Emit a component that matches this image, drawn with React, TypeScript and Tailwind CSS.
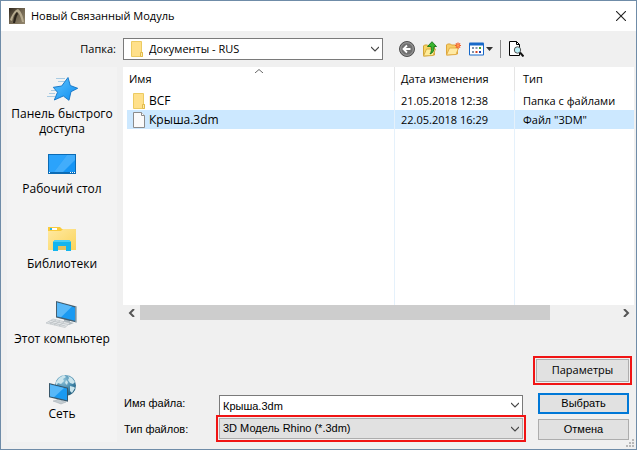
import { useState } from "react";
import type { ReactNode } from "react";

type Place = { title: string; icon: ReactNode };
type FileRow = { name: string; date: string; type: string; folder: boolean };

const StarIcon = () => (
  <svg className="h-8 w-8" viewBox="0 0 32 32" aria-hidden="true">
    <defs>
      <linearGradient id="star" x1="0" y1="0" x2="1" y2="1">
        <stop offset="0" stopColor="#5cc4ff" />
        <stop offset="1" stopColor="#0f8df0" />
      </linearGradient>
    </defs>
    <path
      d="M10 5.500h9M12 8.500h7M5 17.500h5M3 20.500h6M1 23.500h8"
      stroke="#a9cbe2"
      strokeWidth="1"
    />
    <path
      d="M22 4.500 24.300 12.500 31.700 15.300 25 18.700 23 27.300 17.300 23 8.300 27 11.500 19.300 7.300 14.300 15.700 13Z"
      fill="url(#star)"
      stroke="#1273c4"
      strokeWidth="0.900"
    />
  </svg>
);

const DesktopIcon = () => (
  <svg className="h-8 w-8" viewBox="0 0 32 32" aria-hidden="true">
    <rect x="2" y="6" width="28" height="20" fill="#0b6bb5" />
    <rect x="3" y="7" width="26" height="17" fill="#1595f5" />
    <path d="M3 24V7h18L8 24Z" fill="#2ba3fb" />
    <path d="M29 7v5L17 24H8L21 7Z" fill="#42adfb" />
    <path d="M3 24.500h1M24 24.500h1M26 24.500h1M28 24.500h1" stroke="#fff" />
  </svg>
);

const LibraryIcon = () => (
  <svg className="h-8 w-8" viewBox="0 0 32 32" aria-hidden="true">
    <defs>
      <linearGradient id="lib" x1="0" y1="0" x2="1" y2="1">
        <stop offset="0" stopColor="#ffe9a2" />
        <stop offset="1" stopColor="#fad45c" />
      </linearGradient>
    </defs>
    <path d="M2 4h12l2 2h14v4H2Z" fill="#f9cb3c" />
    <path d="M4 5h7v2H4Z" fill="#fff" />
    <path d="M4 5h2v2H4Z" fill="#28b5e8" />
    <path d="M2 8h13l2-2h13v21H2Z" fill="url(#lib)" />
    <path d="M9 17h14l2 2v9h-5v-5h-8v5H7v-9Z" fill="#12b5ee" />
    <path d="M9 17h14l2 2H7Z" fill="#4acdf5" />
    <path d="M12 23h8v4h-8Z" fill="#e2c15c" />
  </svg>
);

const ComputerIcon = () => (
  <svg className="h-8 w-8" viewBox="0 0 32 32" aria-hidden="true">
    <path d="m18 20 6 2v2l4 1-5 2-8-3 3-1Z" fill="#aeb8be" />
    <path d="m7 21 17 4-5 4.500L0 25Z" fill="#e4e7e9" stroke="#b4babe" strokeWidth="0.600" />
    <path
      d="m5 22.500 17 4M2.500 24l17 4M10 22l-6 4M14 23l-6 4M18 24l-5 4"
      stroke="#b0b7bb"
      strokeWidth="0.600"
    />
    <path d="m10 3 20.500 5.500v16L10 19.500Z" fill="#455f70" />
    <path d="m11 4.500 18 5v13.300L11 18.300Z" fill="#1a9af2" />
    <path d="m11 4.500 15 4.100-11 10.600-4-1Z" fill="#58b8f8" />
    <path d="m29.500 8.500 1 .3v15.700l-1-.3Z" fill="#b8c7d0" />
  </svg>
);

const NetworkIcon = () => (
  <svg className="h-8 w-8" viewBox="0 0 32 32" aria-hidden="true">
    <defs>
      <radialGradient id="globe" cx="0.400" cy="0.250" r="0.800">
        <stop offset="0" stopColor="#8fc3da" />
        <stop offset="0.600" stopColor="#3f84a8" />
        <stop offset="1" stopColor="#1f5876" />
      </radialGradient>
    </defs>
    <circle cx="19.500" cy="12.500" r="10.500" fill="url(#globe)" />
    <path
      d="m10 9 3-4 5-3 2 2-3 2 1 2-3 3-3-1-2 3ZM22 3l4 2 3 4-2 2-3-1-2-3 1-2ZM24 13l4 1 1 1-3 5-2-2ZM20 7l2 2-1 3-2-2Z"
      fill="#cbe5ed"
    />
    <path d="m11 24 5 2v2l4 1-5 2-8-3 4-1Z" fill="#c3ccd1" stroke="#929da4" strokeWidth="0.400" />
    <path d="m3 10 19 4.700v14L3 24.300Z" fill="#38576b" />
    <path d="m4 11.400 17 4.200v11.600L4 23.200Z" fill="#1a9af2" />
    <path d="m4 11.400 14 3.500-10 9.300-4-1Z" fill="#58b8f8" />
  </svg>
);

const FolderIcon = () => (
  <svg className="h-4 w-4 shrink-0" viewBox="0 0 16 16" aria-hidden="true">
    <path d="M2.500.500h10v11h1v4h-11Z" fill="#ffe08a" stroke="#eccb62" />
    <path d="M11.500 15.500v-4h2v4Z" fill="#ffeaa8" stroke="#e2bb4b" />
  </svg>
);

const FileIcon = () => (
  <svg className="h-4 w-4 shrink-0" viewBox="0 0 16 16" aria-hidden="true">
    <path d="M2.500.500h8l3 3v12h-11Z" fill="#fafafa" stroke="#8b8b8b" />
    <path d="M10.500.500v3h3" fill="#fff" stroke="#8b8b8b" />
  </svg>
);

const Chevron = () => (
  <svg
    className="pointer-events-none absolute top-1/2 right-1 h-2 w-2 -translate-y-1/2"
    viewBox="0 0 8 8"
    aria-hidden="true">
    <path d="M0 2l4 4 4-4" fill="none" stroke="#444" strokeWidth="1.100" />
  </svg>
);

const places: Place[] = [
  { title: "Панель быстрого доступа", icon: <StarIcon /> },
  { title: "Рабочий стол", icon: <DesktopIcon /> },
  { title: "Библиотеки", icon: <LibraryIcon /> },
  { title: "Этот компьютер", icon: <ComputerIcon /> },
  { title: "Сеть", icon: <NetworkIcon /> },
];

const files: FileRow[] = [
  { name: "BCF", date: "21.05.2018 12:38", type: "Папка с файлами", folder: true },
  { name: "Крыша.3dm", date: "22.05.2018 16:29", type: 'Файл "3DM"', folder: false },
];

const TitleBar = () => (
  <header className="flex h-[30px] items-center bg-white pr-1.5 pl-2">
    <svg className="mr-1.5 h-4 w-4" viewBox="0 0 16 16" aria-hidden="true">
      <defs>
        <linearGradient id="app" x1="0" y1="0" x2="1" y2="1">
          <stop offset="0" stopColor="#2e261c" />
          <stop offset="0.450" stopColor="#6d614d" />
          <stop offset="1" stopColor="#94886f" />
        </linearGradient>
      </defs>
      <rect width="16" height="16" fill="url(#app)" />
      <path d="M1 12C3 6 6 2 9 1c3 2 5 7 6 13h-2C12 9 10 5 8 4c-3 2-4 5-5 9Z" fill="#b5a98d" />
      <path d="M4 15C5 9 6 6 8 4l1 2c-2 3-2 6-3 9Z" fill="#2b241a" />
    </svg>
    <h1 className="flex-1 text-[11px]">Новый Связанный Модуль</h1>
    <button className="p-1" aria-label="Закрыть">
      <svg className="h-2.5 w-2.5" viewBox="0 0 10 10" aria-hidden="true">
        <path d="M0 0l10 10M10 0L0 10" stroke="#222" strokeWidth="1.100" />
      </svg>
    </button>
  </header>
);

const Toolbar = () => (
  <div className="flex items-center gap-[7px]">
    <button aria-label="Назад">
      <svg className="h-4 w-4" viewBox="0 0 16 16" aria-hidden="true">
        <circle cx="8" cy="8" r="7.500" fill="#707070" stroke="#505050" />
        <circle cx="8" cy="8" r="6.300" fill="none" stroke="#a5a5a5" strokeWidth="0.900" />
        <path d="M8 4.500 4.500 8 8 11.500M5 8h6.500" fill="none" stroke="#fff" strokeWidth="1.800" />
      </svg>
    </button>
    <button aria-label="Вверх">
      <svg className="h-4 w-4" viewBox="0 0 16 16" aria-hidden="true">
        <path d="M1.500 15V5l1-1h3l1 1h6v9Z" fill="#f6d565" stroke="#d2a438" />
        <path d="m1.500 15 3-7h9l-2.500 6.500Z" fill="#ffec9a" stroke="#d8ae45" />
        <path
          d="M5.500 5.500 10 .700 14.500 5.500H12c.2 4-1 6.500-4 7.500 1.500-2 1.700-4.500 1-7.500Z"
          fill="#39b52f"
          stroke="#17751a"
          strokeWidth="0.900"
        />
      </svg>
    </button>
    <button aria-label="Новая папка">
      <svg className="h-4 w-4" viewBox="0 0 16 16" aria-hidden="true">
        <path d="M1.500 14V4l1-1h3l1 1h6v9Z" fill="#f6cf68" stroke="#dda53c" />
        <path d="m1.500 14 3-7h9l-2.500 6.500Z" fill="#ffeaa5" stroke="#e3ae48" />
        <path
          d="M13 1.500v6M10 4.500h6M10.900 2.400l4.200 4.200M15.100 2.400l-4.200 4.200"
          stroke="#f0592a"
          strokeWidth="1.200"
        />
        <circle cx="13" cy="4.500" r="1.300" fill="#ffa04c" />
      </svg>
    </button>
    <button aria-label="Вид">
      <svg className="h-4 w-[25px]" viewBox="0 0 25 16" aria-hidden="true">
        <rect x="1" y="1.500" width="15" height="13" rx="1" fill="#1769c9" />
        <rect x="2" y="4.500" width="13" height="9" fill="#fff" />
        <path d="M4 6h2v2H4ZM4 10h2v2H4Z" fill="#7d91ad" />
        <path d="M7.500 6h2v2h-2Z" fill="#8594ac" />
        <path d="M11 6h2v2h-2Z" fill="#45a32f" />
        <path d="M7.500 10h2v2h-2Z" fill="#d64623" />
        <path d="M11 10h2v2h-2Z" fill="#203fae" />
        <path d="M18 6h7l-3.500 4Z" fill="#333" />
      </svg>
    </button>
    <span className="h-[18px] w-px bg-[#8c8c8c]" />
    <button aria-label="Просмотр">
      <svg className="h-4 w-4" viewBox="0 0 16 16" aria-hidden="true">
        <path d="M1.500.500h7l3 3v11h-10Z" fill="#fff" stroke="#000" />
        <path d="M8.500.500v3h3" fill="none" stroke="#000" />
        <circle cx="9.500" cy="9" r="3.200" fill="#b9eef5" stroke="#555" />
        <path d="m12 11.500 3.500 4" stroke="#111" strokeWidth="2" />
      </svg>
    </button>
  </div>
);

const Places = () => (
  <nav className="w-[110px] shrink-0 bg-[#f3f3f3]">
    {places.map((place) => (
      <button
        key={place.title}
        className="flex h-[75px] w-full flex-col items-center px-1 pt-1.5 text-[12px] leading-[15px]">
        {place.icon}
        <span className="mt-px">{place.title}</span>
      </button>
    ))}
  </nav>
);

const FileList = () => {
  const [selected, setSelected] = useState<string>("Крыша.3dm");

  return (
    <div className="flex flex-1 flex-col">
      <div className="flex flex-1 bg-white">
        <table className="w-full table-fixed border-separate border-spacing-0 text-left text-[11px] leading-4">
          <colgroup>
            <col className="w-[272px]" />
            <col className="w-[120px]" />
            <col />
          </colgroup>
          <thead>
            <tr className="h-6">
              <th className="relative border-r border-[#e5e5e5] pl-1.5 font-normal">
                Имя
                <svg className="absolute top-0.5 left-1/2 h-1 w-2 -translate-x-1/2" viewBox="0 0 8 4" aria-hidden="true">
                  <path d="M0 4l4-3.500L8 4" fill="none" stroke="#666" />
                </svg>
              </th>
              <th className="border-r border-[#e5e5e5] pl-1.5 font-normal">Дата изменения</th>
              <th className="pl-2 font-normal">Тип</th>
            </tr>
          </thead>
          <tbody>
            {files.map((file) => (
              <tr
                key={file.name}
                className={file.name === selected ? "h-[19px] bg-[#cce8ff]" : "h-[19px]"}
                onClick={() => setSelected(file.name)}>
                <td className="border-r border-l-4 border-r-[#e5f1fb] border-l-white">
                  <div className="flex items-center gap-0.5 pl-1">
                    {file.folder ? <FolderIcon /> : <FileIcon />}
                    <span className="text-[12px]">{file.name}</span>
                  </div>
                </td>
                <td className="border-r border-[#e5f1fb] pl-1.5">{file.date}</td>
                <td className="pl-2">{file.type}</td>
              </tr>
            ))}
            <tr>
              <td className="border-r border-[#e5f1fb]" />
              <td className="border-r border-[#e5f1fb]" />
              <td />
            </tr>
          </tbody>
        </table>
      </div>
      <div className="flex h-[15px]">
        <button className="flex w-[17px] items-center justify-center" aria-label="Влево">
          <svg className="h-2 w-2" viewBox="0 0 8 8" aria-hidden="true">
            <path d="M6 0 2 4l4 4" fill="none" stroke="#555" strokeWidth="2" />
          </svg>
        </button>
        <div className="flex-1">
          <div className="h-full w-[86%] bg-[#cdcdcd]" />
        </div>
        <button className="flex w-[17px] items-center justify-center" aria-label="Вправо">
          <svg className="h-2 w-2" viewBox="0 0 8 8" aria-hidden="true">
            <path d="M2 0l4 4-4 4" fill="none" stroke="#555" strokeWidth="2" />
          </svg>
        </button>
      </div>
    </div>
  );
};

const Footer = () => {
  const [fileName, setFileName] = useState<string>("Крыша.3dm");

  return (
    <form className="pt-9 pr-0.5 font-['Liberation_Sans',sans-serif] text-[11px]">
      <div className="flex justify-end">
        <div className="flex w-[99px] border-2 border-[#f01414] p-px">
          <button
            type="button"
            className="h-[23px] flex-1 border border-[#adadad] bg-[#e1e1e1] font-['Open_Sans','Noto_Sans',sans-serif]">
            Параметры
          </button>
        </div>
      </div>
      <div className="mt-2 flex">
        <div className="flex-1">
          <div className="flex">
            <label htmlFor="file" className="w-24 pt-0.5 pl-px">
              Имя файла:
            </label>
            <div className="relative mt-0.5 mr-[3px] flex-1">
              <input
                id="file"
                className="block h-5 w-full border border-b-0 border-[#7a7a7a] bg-white px-[3px]"
                value={fileName}
                onChange={(e) => setFileName(e.target.value)}
              />
              <Chevron />
            </div>
          </div>
          <div className="flex">
            <label htmlFor="type" className="w-[93px] pt-1.5 pl-px">
              Тип файлов:
            </label>
            <div className="flex-1 border-2 border-[#f01414] p-px">
              <div className="relative">
                <select
                  id="type"
                  className="block h-[21px] w-full appearance-none border border-[#adadad] bg-[#e1e1e1] px-[3px]">
                  <option>3D Модель Rhino (*.3dm)</option>
                </select>
                <Chevron />
              </div>
            </div>
          </div>
        </div>
        <div className="ml-3 flex w-[94px] flex-col gap-[5px] pr-[3px]">
          <button type="submit" className="h-[21px] border-2 border-[#0078d7] bg-[#e1e1e1]">
            Выбрать
          </button>
          <button type="button" className="h-[21px] border border-[#adadad] bg-[#e1e1e1]">
            Отмена
          </button>
        </div>
      </div>
    </form>
  );
};

const App = () => {
  return (
    <main className="relative flex min-h-screen flex-col border border-[#6f8ca8] bg-[#f0f0f0] font-['Open_Sans','Noto_Sans',sans-serif] text-black">
      <TitleBar />
      <div className="flex items-center pt-[7px]">
        <label htmlFor="folder" className="w-[115px] text-right text-[11px]">
          Папка:
        </label>
        <div className="relative mr-4 ml-[7px] flex w-[41%] items-center">
          <span className="pointer-events-none absolute left-1.5">
            <FolderIcon />
          </span>
          <select
            id="folder"
            className="h-[22px] w-full appearance-none border border-[#7a7a7a] bg-white pl-[25px] text-[11px]">
            <option>Документы - RUS</option>
          </select>
          <Chevron />
        </div>
        <Toolbar />
      </div>
      <div className="flex flex-1 gap-1.5 pt-[7px] pr-0.5 pb-[7px] pl-1.5">
        <Places />
        <div className="flex flex-1 flex-col">
          <FileList />
          <Footer />
        </div>
      </div>
      <svg className="absolute right-0.5 bottom-0.5 h-2 w-2" viewBox="0 0 8 8" aria-hidden="true">
        <path
          d="M6 0h2v2H6ZM6 3h2v2H6ZM6 6h2v2H6ZM3 3h2v2H3ZM3 6h2v2H3ZM0 6h2v2H0Z"
          fill="#b8b8b8"
        />
      </svg>
    </main>
  );
};

export default App;
